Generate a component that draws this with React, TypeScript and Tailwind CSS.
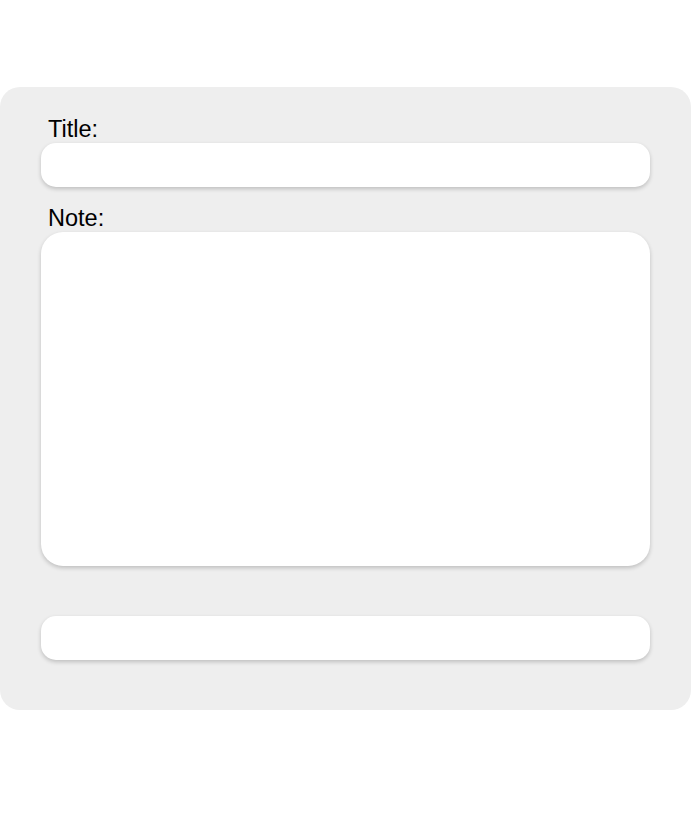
import React from "react";

const App = () => {
  return (
    <div
      className="min-h-[822px] bg-white pt-[87px]"
      style={{ fontFamily: '"Liberation Sans", Arial, sans-serif' }}
    >
      <form className="flex flex-col bg-[#eeeeee] rounded-[20px] px-[41px] pt-[28px] pb-[50px]">
        <label className="pl-[7px] text-[23.5px] leading-[28px] text-black">
          Title:
        </label>
        <input
          type="text"
          className="h-[44px] w-full rounded-[15px] bg-white px-4 outline-none shadow-[0_2px_4px_rgba(0,0,0,0.2)]"
        />
        <label className="mt-[17px] pl-[7px] text-[23.5px] leading-[28px] text-black">
          Note:
        </label>
        <textarea className="h-[334px] w-full resize-none rounded-[22px] bg-white p-4 outline-none shadow-[0_2px_4px_rgba(0,0,0,0.2)]" />
        <div className="mt-[50px] h-[44px] w-full rounded-[15px] bg-white shadow-[0_2px_4px_rgba(0,0,0,0.2)]" />
      </form>
    </div>
  );
};

export default App;
